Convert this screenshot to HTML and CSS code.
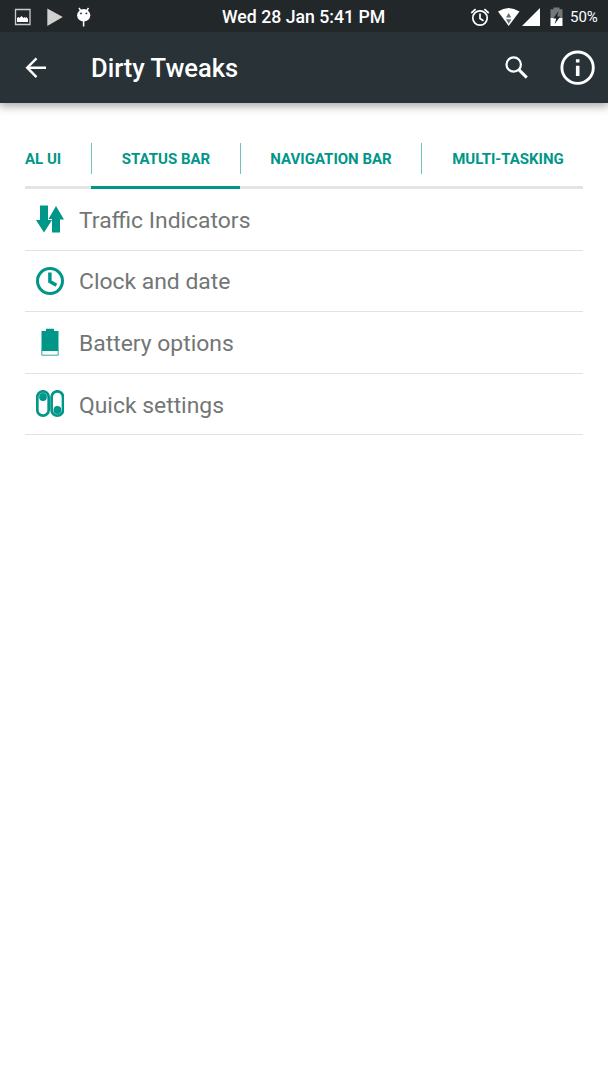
FILE: index.html
```html
<!DOCTYPE html>
<html lang="en">
<head>
<meta charset="utf-8">
<meta name="viewport" content="width=device-width">
<title>Dirty Tweaks</title>
<link rel="stylesheet" href="styles.css">
</head>
<body>
<header class="top">
  <div class="status">
    <svg class="status-left" viewBox="0 0 100 32" aria-hidden="true">
      <path d="M15.500 8.500h14.500v15h-14.500z" fill="none" stroke="#c9cbcc" stroke-width="1.300"/>
      <path d="M17 21v-4l1.500-1 1 1 2-2 2 2 1-1 1 1 1-1 1.500 2v3z" fill="#fff"/>
      <path d="M47.300 7.500v17.500l15.500-9z" fill="#d0d0d0"/>
      <path d="M79 7l2 3M88.500 7l-2 3M83.600 20v5.500" fill="none" stroke="#fff" stroke-width="1.500"/>
      <ellipse cx="83.700" cy="14.300" rx="6.600" ry="6.200" fill="#fff"/>
      <circle cx="81" cy="12.400" r=".9" fill="#22272a"/><circle cx="86.400" cy="12.400" r=".9" fill="#22272a"/>
    </svg>
    <span class="clock">Wed 28 Jan 5:41 PM</span>
    <div class="status-right">
      <svg class="status-icons" viewBox="468 0 98 32" aria-hidden="true">
        <g fill="none" stroke="#fff" stroke-width="1.700">
          <circle cx="480" cy="17" r="7.200"/>
          <path d="M480 12.500v5l3.500 2.200M471.300 12l4.300-3.800M488.700 12l-4.300-3.800"/>
        </g>
        <path d="M498 10.500Q508.500 3.500 519.500 10.500L508.700 25z" fill="#fff"/>
        <path d="M508.700 12l2.700 4.500h-5.400zM506 18.300h5.400l-2.700 4.500z" fill="#687073"/>
        <path d="M540 7v18h-18z" fill="#fff"/>
        <path d="M550.500 8.300h3V6.500h6v1.800h3V17h-12z" fill="#747879"/>
        <path d="M550.500 17h12v8h-12z" fill="#fff"/>
        <path d="M558.500 10l-5.300 7.500h3l-1.500 5.500 5.600-7.500h-3z" fill="#22272a"/>
      </svg>
      <span class="percent">50%</span>
    </div>
  </div>
  <div class="appbar">
    <svg class="back" viewBox="24 56 24 24" role="img" aria-label="Back"><path d="M46 67.700H27.500M36.500 58.300l-9.300 9.400 9.300 9.400" fill="none" stroke="#fff" stroke-width="2.400"/></svg>
    <h1 class="title">Dirty Tweaks</h1>
    <svg class="search" viewBox="503 54 26 26" role="img" aria-label="Search"><circle cx="513.700" cy="63.500" r="7.200" fill="none" stroke="#fff" stroke-width="2.200"/><path d="M518.800 68.600l8 8" stroke="#fff" stroke-width="2.900"/></svg>
    <svg class="info" viewBox="560 50 36 36" role="img" aria-label="Information"><circle cx="577.600" cy="67.700" r="15.700" fill="none" stroke="#fff" stroke-width="2.900"/><path d="M575.900 59.200h3.600v3.200h-3.600zM575.900 65.800h3.600v10.200h-3.600z" fill="#fff"/></svg>
  </div>
</header>
<main class="content">
  <nav class="tabs">
    <a class="tab tab-cut"><span>AL UI</span></a>
    <a class="tab tab-status active"><span>STATUS BAR</span></a>
    <a class="tab tab-nav"><span>NAVIGATION BAR</span></a>
    <a class="tab tab-multi"><span>MULTI-TASKING</span></a>
  </nav>
  <ul class="list">
    <li class="row">
      <svg class="icon" viewBox="36 205 28 28" aria-hidden="true"><path d="M40 205.500h8v14.500h4L44 232.500 36 220h4zM52 232.500h8V219.500H64l-8-13.500-7.500 13h3.500z" fill="#009688"/></svg>
      <span>Traffic Indicators</span>
    </li>
    <li class="row">
      <svg class="icon" viewBox="36 267 28 28" aria-hidden="true"><circle cx="50" cy="281" r="12.500" fill="none" stroke="#009688" stroke-width="3"/><path d="M49.900 272.500v9l6.500 3.800" fill="none" stroke="#009688" stroke-width="3.500"/></svg>
      <span>Clock and date</span>
    </li>
    <li class="row">
      <svg class="icon" viewBox="36 328.500 28 28" aria-hidden="true"><path d="M41.500 331.500h4.500v-2.200h8v2.200h4.500v20h-17z" fill="#009688"/><path d="M41.800 351v4.700h16.400V351" fill="none" stroke="#009688" stroke-width=".8"/></svg>
      <span>Battery options</span>
    </li>
    <li class="row">
      <svg class="icon" viewBox="36 390 28 28" aria-hidden="true"><rect x="37.300" y="391.300" width="11.400" height="24.400" rx="5.700" fill="none" stroke="#009688" stroke-width="2.700"/><rect x="51.600" y="391.300" width="11.400" height="24.400" rx="5.700" fill="none" stroke="#009688" stroke-width="2.700"/><circle cx="43" cy="397" r="3.900" fill="#009688"/><circle cx="57.400" cy="410" r="3.900" fill="#009688"/></svg>
      <span>Quick settings</span>
    </li>
  </ul>
</main>
</body>
</html>
```
FILE: styles.css
```css
* { box-sizing: border-box; }
body { margin: 0; background: #fff; font-family: Roboto, sans-serif; color: #727675; }
.top { height: 103px; color: #fff; background: #283237; box-shadow: 0 2px 9px 1px rgba(0,0,0,.36); }
.status { height: 32px; background: #22272a; display: grid; grid-template-columns: 222px 1fr 140px; align-items: center; }
.status-left { width: 100px; height: 32px; display: block; }
.clock { font-size: 17.700px; font-weight: 500; line-height: 32px; white-space: nowrap; }
.status-right { display: flex; align-items: center; }
.status-icons { width: 98px; height: 32px; flex: none; }
.percent { margin-left: 4px; font-size: 15px; line-height: 32px; padding-top: 1px; }
.appbar { height: 71px; display: flex; align-items: center; padding-left: 24px; }
.appbar svg { flex: none; }
.back { width: 24px; height: 24px; }
.title { width: 411px; margin: 0 0 0 43px; font-size: 25.500px; font-weight: 500; line-height: 36px; }
.search { width: 26px; height: 26px; margin-left: 1px; }
.info { width: 36px; height: 36px; margin-left: 31px; }
.content { padding: 27px 25px 0; }
.tabs { display: flex; height: 59px; padding-top: 13px; border-bottom: 3px solid #e4e4e4; color: #009688; font-size: 15px; font-weight: 700; line-height: 31px; white-space: nowrap; }
.tab { flex: none; height: 46px; }
.tab span { display: block; height: 31px; text-align: center; padding-top: 1px; padding-left: 1px; box-shadow: 1px 0 #70c3bb; }
.tab-cut { width: 66px; }
.tab-cut span { text-align: left; padding-left: 0; }
.tab-status { width: 149px; }
.tab-nav { width: 181px; }
.tab-multi { width: 162px; }
.tab-multi span { box-shadow: none; padding-left: 12px; }
.active { border-bottom: 3px solid #009688; }
.list { list-style: none; margin: 0; padding: 0; }
.row { height: 61.600px; border-bottom: 1px solid #e2e2e2; display: flex; align-items: center; padding-left: 11px; font-size: 22.900px; line-height: 32px; }
.row span { padding-top: 3px; }
.icon { width: 28px; height: 28px; flex: none; margin-right: 15px; }
```
